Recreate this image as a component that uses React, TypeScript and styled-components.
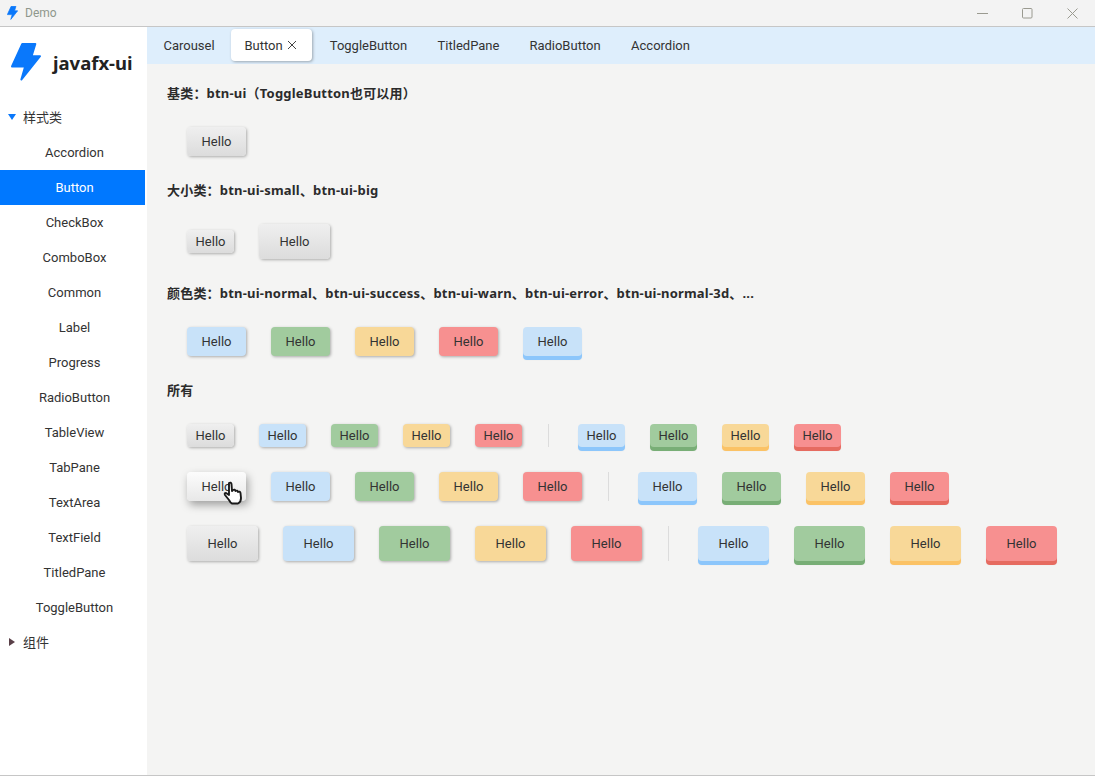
import React from "react";
import styled, { createGlobalStyle } from "styled-components";

const Global = createGlobalStyle`
  html, body { margin: 0; padding: 0; background: #f4f4f3; }
  * { box-sizing: border-box; }
  body { font-family: Roboto, "Noto Sans CJK SC", sans-serif; font-size: 13px; color: #333; }
`;

const Window = styled.div`
  width: 1095px; height: 776px; display: flex; flex-direction: column;
  border-bottom: 1px solid #c6c6c6; overflow: hidden;
`;
const TitleBar = styled.div`
  height: 27px; flex: none; display: flex; align-items: center; padding-left: 7px;
  background: #f3f3f3; border-bottom: 1px solid #c6c6c6;
`;
const TitleText = styled.span`
  margin-left: 7px; font-size: 12px; color: #8f978c; flex: 1;
`;
const WinButton = styled.div`
  width: 45px; height: 26px; display: flex; align-items: center; justify-content: center; color: #9a9a90;
`;
const Body = styled.div`display: flex; flex: 1; min-height: 0;`;
const Sidebar = styled.aside`
  width: 147px; flex: none; background: #fff; display: flex; flex-direction: column;
`;
const Brand = styled.div`
  height: 73px; display: flex; align-items: center; padding: 0 0 2px 11px; gap: 12px;
`;
const BrandName = styled.div`
  font-family: "Noto Sans", "Noto Sans CJK SC", sans-serif; font-size: 18.5px; font-weight: 700; color: #222;
`;
const Group = styled.div`
  width: 145px; height: 35px; display: flex; align-items: center; padding: 0 0 2px 8px; gap: 7px; color: #333;
`;
const NavItem = styled.div<{ $active?: boolean }>`
  width: 145px; height: 35px; display: flex; align-items: center; justify-content: center; padding-left: 4px;
  background: ${(p) => (p.$active ? "#0078ff" : "transparent")};
  color: ${(p) => (p.$active ? "#fff" : "#333")};
`;
const Main = styled.main`flex: 1; display: flex; flex-direction: column; min-width: 0;`;
const TabBar = styled.div`
  height: 37px; flex: none; background: #deeefc; display: flex; gap: 4px; padding: 2px 0 3px 4px;
`;
const Tab = styled.div<{ $active?: boolean; $width: number }>`
  width: ${(p) => p.$width}px;
  height: 32px; display: flex; align-items: center; justify-content: center; gap: 4px; border-radius: 4px; color: #333;
  background: ${(p) => (p.$active ? "#fff" : "transparent")};
  box-shadow: ${(p) => (p.$active ? "1px 1px 3px rgba(0,0,0,.3)" : "none")};
`;
const Content = styled.div`
  flex: 1; padding: 19px 0 0 20px; display: flex; flex-direction: column; gap: 24px; background: #f4f4f3;
`;
const Heading = styled.div`
  font-family: "Noto Sans", "Noto Sans CJK SC", sans-serif;
  font-weight: 700; line-height: 20px; height: 20px; color: #2b2b2b; letter-spacing: 0.2px;
`;
const Row = styled.div<{ $height: number }>`
  display: flex; align-items: center; gap: 25px; padding-left: 20px; height: ${(p) => p.$height}px;
`;
const Rows = styled.div`display: flex; flex-direction: column; gap: 25px;`;

type Size = "small" | "base" | "big";
type Tone = "plain" | "blue" | "green" | "yellow" | "red";
const sizes = { small: [47, 23], base: [59, 29], big: [71, 35] };
const tones: Record<Tone, { bg: string; edge: string }> = {
  plain: { bg: "linear-gradient(#efefef, #dcdcdc)", edge: "#ccc" },
  blue: { bg: "#c8e2f9", edge: "#8cc6fb" },
  green: { bg: "#a1cb9e", edge: "#78ae76" },
  yellow: { bg: "#f8d898", edge: "#fbc265" },
  red: { bg: "#f79090", edge: "#e66b60" },
};
const Btn = styled.div<{ $size: Size; $tone: Tone; $three?: boolean; $hover?: boolean }>`
  position: relative;
  flex: none; display: flex; align-items: center; justify-content: center; border-radius: 4px; color: #333;
  width: ${(p) => sizes[p.$size][0]}px; height: ${(p) => sizes[p.$size][1]}px;
  background: ${(p) => (p.$hover ? "linear-gradient(#fcfcfc, #e8e8e8)" : tones[p.$tone].bg)};
  box-shadow: ${(p) =>
    p.$hover
      ? "2px 4px 8px rgba(0,0,0,.35)"
      : p.$three
      ? `0 4px 0 ${tones[p.$tone].edge}, 0 4px 2px rgba(0,0,0,.06)`
      : "1px 1px 3px rgba(0,0,0,.3)"};
`;
const Sep = styled.div`
  width: 1px; margin: 0 4px 0 1px; align-self: stretch; background: #dcdcdc; flex: none;
`;
const Cursor = styled.svg`
  position: absolute; left: 36px; top: 9px; width: 20px; height: 24px;
`;

const Bolt = ({ size }: { size: number }) => (
  <svg width={size} height={size * 1.27} viewBox="-1 -1 32 40.6">
    <path d="M11 0 H25 L21 13 H30 L10 38 L14 24 H0 Z" fill="#0a78fb" stroke="#0a78fb" strokeWidth="2" strokeLinejoin="round" />
  </svg>
);

const Hello = (p: { size: Size; tone: Tone; three?: boolean }) => (
  <Btn $size={p.size} $tone={p.tone} $three={p.three}>Hello</Btn>
);
const allTones: Tone[] = ["blue", "green", "yellow", "red"];
const FullRow = ({ size, height }: { size: Size; height: number }) => (
  <Row $height={height}>
    {size === "base" ? (
      <Btn $size="base" $tone="plain" $hover>
        Hello
        <Cursor viewBox="0 0 20 24">
          <path d="M6 2 Q8 1 8.5 3 L9 10 L10 9 Q12 8 12.5 10 Q14.5 9 15 11 Q17 10 17.5 12 L18 17 Q18 21 15 22.5 H9 Q7.5 22 6 19 L2 14 Q1 12 3 12 L6 14 Z" fill="#fff" stroke="#1a1a1a" strokeWidth="1.9" strokeLinejoin="round" />
        </Cursor>
      </Btn>
    ) : (
      <Hello size={size} tone="plain" />
    )}
    {allTones.map((t) => <Hello key={t} size={size} tone={t} />)}
    <Sep />
    {allTones.map((t) => <Hello key={t} size={size} tone={t} three />)}
  </Row>
);

const navItems = ["Accordion", "Button", "CheckBox", "ComboBox", "Common", "Label", "Progress", "RadioButton", "TableView", "TabPane", "TextArea", "TextField", "TitledPane", "ToggleButton"];
const tabs = [
  { name: "Carousel", width: 76 },
  { name: "Button", width: 81 },
  { name: "ToggleButton", width: 105 },
  { name: "TitledPane", width: 87 },
  { name: "RadioButton", width: 98 },
  { name: "Accordion", width: 85 },
];

export default function App() {
  return (
    <Window>
      <Global />
      <TitleBar>
        <Bolt size={11} />
        <TitleText>Demo</TitleText>
        <WinButton>
          <svg width="11" height="11" viewBox="0 0 11 11"><path d="M0 5.5H11" stroke="currentColor" /></svg>
        </WinButton>
        <WinButton>
          <svg width="11" height="11" viewBox="0 0 11 11"><rect x=".5" y=".5" width="9.5" height="9.5" rx="1" fill="none" stroke="currentColor" /></svg>
        </WinButton>
        <WinButton>
          <svg width="11" height="11" viewBox="0 0 11 11"><path d="M.5 .5L10.5 10.5M10.5 .5L.5 10.5" stroke="currentColor" /></svg>
        </WinButton>
      </TitleBar>
      <Body>
        <Sidebar>
          <Brand>
            <Bolt size={30} />
            <BrandName>javafx-ui</BrandName>
          </Brand>
          <Group>
            <svg width="8" height="8" viewBox="0 0 8 8"><path d="M0 1H8L4 7Z" fill="#0a78fb" /></svg>
            样式类
          </Group>
          {navItems.map((n) => <NavItem key={n} $active={n === "Button"}>{n}</NavItem>)}
          <Group>
            <svg width="8" height="8" viewBox="0 0 8 8"><path d="M1 0V8L7 4Z" fill="#5a4048" /></svg>
            组件
          </Group>
        </Sidebar>
        <Main>
          <TabBar>
            {tabs.map((t) => (
              <Tab key={t.name} $width={t.width} $active={t.name === "Button"}>
                {t.name}
                {t.name === "Button" && (
                  <svg width="12" height="10" viewBox="0 0 12 10"><path d="M1 1L9 9M9 1L1 9" stroke="#444" strokeWidth="1" /></svg>
                )}
              </Tab>
            ))}
          </TabBar>
          <Content>
            <Heading>基类：btn-ui（ToggleButton也可以用）</Heading>
            <Row $height={29}><Hello size="base" tone="plain" /></Row>
            <Heading>大小类：btn-ui-small、btn-ui-big</Heading>
            <Row $height={35}><Hello size="small" tone="plain" /><Hello size="big" tone="plain" /></Row>
            <Heading>颜色类：btn-ui-normal、btn-ui-success、btn-ui-warn、btn-ui-error、btn-ui-normal-3d、...</Heading>
            <Row $height={29}>
              {allTones.map((t) => <Hello key={t} size="base" tone={t} />)}
              <Hello size="base" tone="blue" three />
            </Row>
            <Heading>所有</Heading>
            <Rows>
              <FullRow size="small" height={23} />
              <FullRow size="base" height={29} />
              <FullRow size="big" height={35} />
            </Rows>
          </Content>
        </Main>
      </Body>
    </Window>
  );
}
